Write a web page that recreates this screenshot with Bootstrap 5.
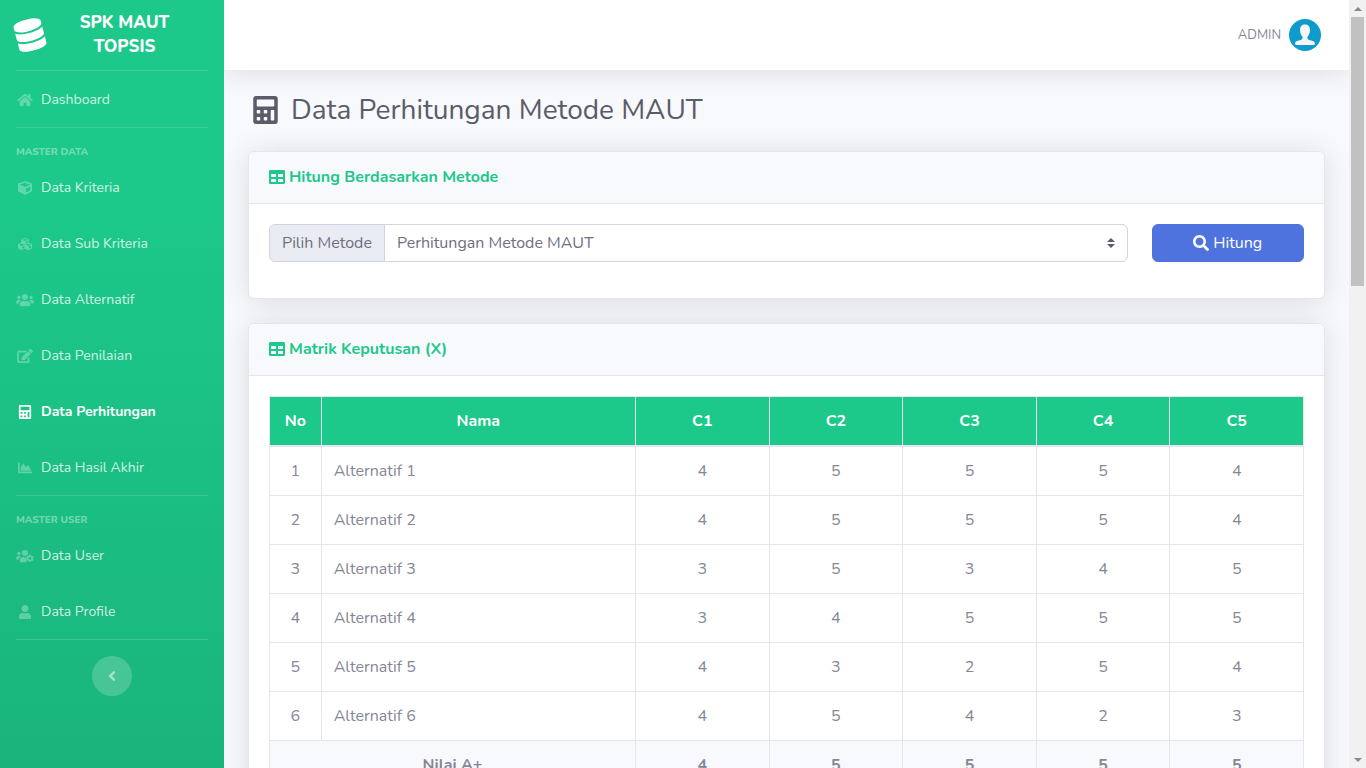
<!DOCTYPE html>
<html lang="id">
<head>
<meta charset="utf-8">
<meta name="viewport" content="width=device-width, initial-scale=1">
<title>SPK MAUT TOPSIS</title>
<link href="https://cdn.jsdelivr.net/npm/bootstrap@5.3.0/dist/css/bootstrap.min.css" rel="stylesheet">
<style>
  body { font-family: "Nunito", "Lato", sans-serif; font-size: 16px; line-height: 24px; color: #858796; background: #f8f9fc; }
  svg { fill: currentColor; overflow: visible; }

  /* Sidebar */
  .side-panel { width: 224px; background: linear-gradient(180deg, #1cc88a 210px, #13855c 2095px); }
  .side-brand { height: 70px; padding: 0 20px 0 15px; font-size: 17px; font-weight: 800; color: #fff; }
  .side-brand svg { width: 30px; height: 32px; transform: rotate(-15deg); }
  .side-rule { margin: 0 16px; border: 0; border-top: 1px solid #fff; opacity: .15; }
  .side-title { padding: 16px 16px 0; height: 31px; font-size: 10px; line-height: 16px; font-weight: 800; color: rgba(255,255,255,.4); }
  .side-panel .nav-link { height: 56px; padding: 1px 16px 0; font-size: 14px; color: rgba(255,255,255,.8); gap: 7px; }
  .side-panel .nav-link svg { width: 18px; height: 14px; color: rgba(255,255,255,.3); }
  .side-panel .nav-link.active, .side-panel .nav-link.active svg { color: #fff; font-weight: 700; }
  .side-toggle { width: 40px; height: 40px; background: rgba(255,255,255,.2); color: rgba(255,255,255,.5); }
  .side-toggle svg { height: 16px; }

  /* Top bar */
  .top-line { height: 70px; padding: 0 28px; background: #fff; box-shadow: 0 2px 28px rgba(58,59,69,.15); }
  .top-line a { font-size: 13px; color: #858796; }

  /* Content */
  .page-area { padding: 23px 24px 0; }
  .page-title { font-size: 28px; line-height: 34px; font-weight: 400; color: #5a5c69; }
  .page-title svg { height: 28px; width: 35px; }
  .panel { --bs-card-border-color: #e3e6f0; --bs-card-cap-bg: #f8f9fc; --bs-card-spacer-x: 20px; --bs-card-spacer-y: 20px; --bs-card-cap-padding-x: 20px; --bs-card-color: #858796; --bs-card-border-radius: 6px; box-shadow: 0 2px 28px rgba(58,59,69,.15); }
  .panel .card-header { height: 52px; padding-top: 13px; color: #1cc88a; }
  .panel .card-header h2 { font-size: 16px; line-height: 24px; font-weight: 700; }
  .panel .card-header svg { height: 16px; width: 16px; }
  .input-group-text { background: #eaecf4; border-color: #d1d3e2; color: #6e707e; }
  .form-select { border-color: #d1d3e2; color: #6e707e; background-size: 8px 10px; background-image: url("data:image/svg+xml,%3csvg xmlns='http://www.w3.org/2000/svg' viewBox='0 0 4 5'%3e%3cpath fill='%235a5c69' d='M2 0L0 2h4zm0 5L0 3h4z'/%3e%3c/svg%3e"); }
  .btn-hitung { --bs-btn-bg: #4e73df; --bs-btn-border-color: #4e73df; --bs-btn-hover-bg: #2e59d9; }
  .btn-hitung svg { width: 16px; height: 16px; }
  .score-table { --bs-table-color: #858796; --bs-table-bg: #fff; --bs-table-border-color: #e3e6f0; table-layout: fixed; border-color: #e3e6f0; }
  .score-table > :not(caption) > * > * { padding: 12px; }
  .score-table > thead > tr > th { --bs-table-bg: #1cc88a; color: #fff; border-bottom: 2px solid #e3e6f0; }
  .score-table tfoot { --bs-table-bg: #f8f9fc; border-top-width: 1px; }
  .c-no { width: 5%; }
  .c-name { width: 30.4%; }

  /* Scroll rail */
  .rail { width: 17px; background: #f1f1f1; }
  .rail span { height: 17px; }
  .rail-thumb { height: 269px; width: 13px; background: #c1c1c1; }
</style>
</head>
<body>
<svg class="d-none" aria-hidden="true">
  <symbol id="i-db" viewBox="0 0 448 512"><path d="M448 73.143v45.714C448 159.143 347.667 192 224 192S0 159.143 0 118.857V73.143C0 32.857 100.333 0 224 0s224 32.857 224 73.143zM448 176v102.857C448 319.143 347.667 352 224 352S0 319.143 0 278.857V176c48.125 33.143 136.208 48.572 224 48.572S399.874 209.143 448 176zm0 160v102.857C448 479.143 347.667 512 224 512S0 479.143 0 438.857V336c48.125 33.143 136.208 48.572 224 48.572S399.874 369.143 448 336z"/></symbol>
  <symbol id="i-home" viewBox="0 0 576 512"><path d="M280.37 148.26L96 300.11V464a16 16 0 0 0 16 16l112.06-.29a16 16 0 0 0 15.92-16V368a16 16 0 0 1 16-16h64a16 16 0 0 1 16 16v95.64a16 16 0 0 0 16 16.05L464 480a16 16 0 0 0 16-16V300L295.67 148.26a12.19 12.19 0 0 0-15.3 0zM571.6 251.47L488 182.56V44.05a12 12 0 0 0-12-12h-56a12 12 0 0 0-12 12v72.61L318.47 43a48 48 0 0 0-61 0L4.34 251.47a12 12 0 0 0-1.6 16.9l25.5 31A12 12 0 0 0 45.15 301l235.22-193.74a12.19 12.19 0 0 1 15.3 0L530.9 301a12 12 0 0 0 16.9-1.6l25.5-31a12 12 0 0 0-1.7-16.93z"/></symbol>
  <symbol id="i-cube" viewBox="0 0 512 512"><path d="M239.1 6.3l-208 78c-18.7 7-31.1 25-31.1 45v225.1c0 18.2 10.3 34.8 26.5 42.9l208 104c13.5 6.8 29.4 6.8 42.9 0l208-104c16.3-8.1 26.5-24.8 26.5-42.9V129.3c0-20-12.4-37.9-31.1-44.9l-208-78C262 2.2 250 2.2 239.1 6.3zM256 68.4l192 72v1.1l-192 78-192-78v-1.1l192-72zm32 356V275.5l160-65v133.9l-160 80z"/></symbol>
  <symbol id="i-cubes" viewBox="0 0 512 512"><path d="M488.6 250.2L392 214V105.500c0-15-9.300-28.400-23.400-33.700l-100-37.500c-8.100-3.100-17.100-3.100-25.300 0l-100 37.500c-14.100 5.300-23.400 18.700-23.400 33.700V214l-96.600 36.200C9.300 255.500 0 268.900 0 283.900V394c0 13.600 7.700 26.100 19.900 32.200l100 50c10.100 5.100 22.100 5.100 32.200 0l103.900-52 103.900 52c10.100 5.100 22.100 5.100 32.200 0l100-50c12.200-6.100 19.900-18.600 19.900-32.200V283.900c0-15-9.300-28.400-23.400-33.700zM358 214.800l-85 31.900v-68.200l85-37v73.300zM154 104.100l102-38.200 102 38.200v.6l-102 41.400-102-41.400v-.6zm84 291.100l-85 42.500v-79.100l85-38.800v75.400zm0-112l-102 41.400-102-41.400v-.6l102-38.200 102 38.200v.6zm240 112l-85 42.500v-79.100l85-38.800v75.400zm0-112l-102 41.400-102-41.400v-.6l102-38.200 102 38.200v.6z"/></symbol>
  <symbol id="i-users" viewBox="0 0 640 512"><path d="M96 224c35.300 0 64-28.700 64-64s-28.700-64-64-64-64 28.700-64 64 28.700 64 64 64zm448 0c35.300 0 64-28.700 64-64s-28.700-64-64-64-64 28.700-64 64 28.700 64 64 64zm32 32h-64c-17.600 0-33.500 7.100-45.100 18.600 40.300 22.100 68.900 62 75.100 109.400h66c17.700 0 32-14.300 32-32v-32c0-35.300-28.700-64-64-64zm-256 0c61.900 0 112-50.100 112-112S381.900 32 320 32 208 82.100 208 144s50.100 112 112 112zm76.800 32h-8.300c-20.800 10-43.900 16-68.500 16s-47.600-6-68.500-16h-8.300C179.600 288 128 339.600 128 403.200V432c0 26.500 21.500 48 48 48h288c26.500 0 48-21.500 48-48v-28.800c0-63.600-51.600-115.200-115.200-115.200zm-223.700-13.400C161.500 263.100 145.600 256 128 256H64c-35.300 0-64 28.700-64 64v32c0 17.700 14.300 32 32 32h65.900c6.300-47.400 34.900-87.300 75.200-109.400z"/></symbol>
  <symbol id="i-edit" viewBox="0 0 576 512"><path d="M402.600 83.200l90.200 90.200c3.800 3.800 3.800 10 0 13.800L274.400 405.600l-92.800 10.300c-12.400 1.400-22.900-9.100-21.500-21.500l10.300-92.800L388.800 83.200c3.800-3.800 10-3.800 13.800 0zm162-22.900l-48.800-48.800c-15.200-15.200-39.900-15.200-55.200 0l-35.400 35.400c-3.800 3.800-3.800 10 0 13.800l90.200 90.200c3.800 3.800 10 3.800 13.800 0l35.400-35.400c15.200-15.300 15.200-40 0-55.200zM384 346.200V448H64V128h229.800c3.200 0 6.200-1.300 8.500-3.500l40-40c7.600-7.600 2.200-20.500-8.500-20.500H48C21.500 64 0 85.500 0 112v352c0 26.500 21.500 48 48 48h352c26.500 0 48-21.500 48-48V306.200c0-10.700-12.900-16-20.500-8.500l-40 40c-2.200 2.300-3.500 5.300-3.500 8.500z"/></symbol>
  <symbol id="i-calc" viewBox="0 0 448 512"><path fill-rule="evenodd" d="M48 0h352c26 0 48 22 48 48v416c0 26-22 48-48 48H48c-26 0-48-22-48-48V48C0 22 22 0 48 0zM77 64c-7 0-13 6-13 13v102c0 7 6 13 13 13h294c7 0 13-6 13-13V77c0-7-6-13-13-13zM77 256c-7 0-13 6-13 13v38c0 7 6 13 13 13h38c7 0 13-6 13-13v-38c0-7-6-13-13-13zM205 256c-7 0-13 6-13 13v38c0 7 6 13 13 13h38c7 0 13-6 13-13v-38c0-7-6-13-13-13zM333 256c-7 0-13 6-13 13v166c0 7 6 13 13 13h38c7 0 13-6 13-13V269c0-7-6-13-13-13zM77 384c-7 0-13 6-13 13v38c0 7 6 13 13 13h38c7 0 13-6 13-13v-38c0-7-6-13-13-13zM205 384c-7 0-13 6-13 13v38c0 7 6 13 13 13h38c7 0 13-6 13-13v-38c0-7-6-13-13-13z"/></symbol>
  <symbol id="i-chart" viewBox="0 0 512 512"><path d="M500 384c6.600 0 12 5.400 12 12v40c0 6.600-5.400 12-12 12H12c-6.600 0-12-5.400-12-12V76c0-6.600 5.400-12 12-12h40c6.600 0 12 5.400 12 12v308h436zM372.700 159.500L288 216l-85.300-113.700c-5.100-6.800-15.500-6.300-19.900 1L96 248v104h384l-89.900-187.800c-3.200-6.500-11.400-8.700-17.400-4.700z"/></symbol>
  <symbol id="i-cog" viewBox="0 0 640 512"><path fill-rule="evenodd" d="M96 224a64 64 0 1 0 0-128 64 64 0 0 0 0 128zM320 256a112 112 0 1 0 0-224 112 112 0 0 0 0 224zM173 275c-12-12-28-19-45-19H64c-35 0-64 29-64 64v32c0 18 14 32 32 32h66c6-47 35-87 75-109zM402 480c-20-20-44-52-36-74 7-17 11-12 7-32-6-26 3-52 23-86h-8a158 158 0 0 1-136 0h-9c-63 0-115 52-115 115v29c0 27 22 48 48 48zM470 205h66l9 39 22 12 38-12 33 57-29 27v26l29 27-33 57-38-12-22 12-9 39h-66l-9-39-22-12-38 12-33-57 29-27v-26l-29-27 33-57 38 12 22-12zM503 292a49 49 0 1 0 0 98 49 49 0 0 0 0-98z"/></symbol>
  <symbol id="i-user" viewBox="0 0 448 512"><path d="M224 256c70.700 0 128-57.300 128-128S294.700 0 224 0 96 57.300 96 128s57.300 128 128 128zm89.600 32h-16.700c-22.200 10.200-46.900 16-72.900 16s-50.600-5.800-72.900-16h-16.700C60.200 288 0 348.200 0 422.400V464c0 26.500 21.500 48 48 48h352c26.500 0 48-21.500 48-48v-41.600c0-74.200-60.200-134.400-134.400-134.400z"/></symbol>
  <symbol id="i-left" viewBox="0 0 256 512"><path d="M31.700 239l136-136c9.400-9.400 24.600-9.400 33.900 0l22.600 22.600c9.400 9.400 9.400 24.600 0 33.900L127.900 256l96.400 96.400c9.400 9.400 9.400 24.600 0 33.900L201.700 409c-9.400 9.400-24.600 9.400-33.900 0l-136-136c-9.500-9.400-9.500-24.600-.1-34z"/></symbol>
  <symbol id="i-table" viewBox="0 0 512 512"><path d="M464 32H48C21.490 32 0 53.490 0 80v352c0 26.510 21.490 48 48 48h416c26.510 0 48-21.490 48-48V80c0-26.510-21.490-48-48-48zM224 416H64v-96h160v96zm0-160H64v-96h160v96zm224 160H288v-96h160v96zm0-160H288v-96h160v96z"/></symbol>
  <symbol id="i-search" viewBox="0 0 512 512"><path d="M505 442.700L405.300 343c-4.500-4.500-10.600-7-17-7H372c27.600-35.300 44-79.700 44-128C416 93.100 322.900 0 208 0S0 93.100 0 208s93.100 208 208 208c48.300 0 92.700-16.400 128-44v16.300c0 6.400 2.500 12.500 7 17l99.700 99.700c9.400 9.400 24.600 9.400 33.900 0l28.300-28.300c9.400-9.400 9.400-24.600.1-34zM208 336c-70.700 0-128-57.200-128-128 0-70.700 57.200-128 128-128 70.700 0 128 57.200 128 128 0 70.700-57.200 128-128 128z"/></symbol>
</svg>

<div class="d-flex vh-100 overflow-hidden">
  <aside class="side-panel flex-shrink-0">
    <div class="side-brand d-flex align-items-center">
      <svg class="flex-shrink-0"><use href="#i-db"/></svg>
      <div class="flex-fill text-center px-3">SPK MAUT TOPSIS</div>
    </div>
    <hr class="side-rule">
    <nav class="nav flex-column flex-nowrap">
      <a class="nav-link d-flex align-items-center" href="#"><svg><use href="#i-home"/></svg>Dashboard</a>
      <hr class="side-rule">
      <div class="side-title">MASTER DATA</div>
      <a class="nav-link d-flex align-items-center" href="#"><svg><use href="#i-cube"/></svg>Data Kriteria</a>
      <a class="nav-link d-flex align-items-center" href="#"><svg><use href="#i-cubes"/></svg>Data Sub Kriteria</a>
      <a class="nav-link d-flex align-items-center" href="#"><svg><use href="#i-users"/></svg>Data Alternatif</a>
      <a class="nav-link d-flex align-items-center" href="#"><svg><use href="#i-edit"/></svg>Data Penilaian</a>
      <a class="nav-link d-flex align-items-center active" aria-current="page" href="#"><svg><use href="#i-calc"/></svg>Data Perhitungan</a>
      <a class="nav-link d-flex align-items-center" href="#"><svg><use href="#i-chart"/></svg>Data Hasil Akhir</a>
      <hr class="side-rule">
      <div class="side-title">MASTER USER</div>
      <a class="nav-link d-flex align-items-center" href="#"><svg><use href="#i-cog"/></svg>Data User</a>
      <a class="nav-link d-flex align-items-center" href="#"><svg><use href="#i-user"/></svg>Data Profile</a>
      <hr class="side-rule">
    </nav>
    <button type="button" class="side-toggle btn rounded-circle border-0 p-0 d-flex align-items-center justify-content-center mx-auto mt-3" aria-label="Ciutkan menu"><svg width="8"><use href="#i-left"/></svg></button>
  </aside>

  <div class="flex-fill overflow-hidden">
    <header class="top-line d-flex align-items-center justify-content-end">
      <a href="#" class="d-flex align-items-center gap-2 text-decoration-none">ADMIN
        <svg width="32" height="32" viewBox="0 0 32 32"><circle cx="16" cy="16" r="16" fill="#0d9ccc"/><path fill="#f7f5f5" d="M16 5.500c3 0 5 2 5 5.500 0 2.500-1 5-2.400 6.500-.6 1.500-.2 2.800 1.400 3.400 2.600.9 6 .9 6 3.600 0 1.300-1 1.500-2.200 1.500H8.200C7 26 6 25.800 6 24.500c0-2.700 3.400-2.700 6-3.600 1.600-.6 2-1.900 1.400-3.400C12 16 11 13.500 11 11c0-3.500 2-5.500 5-5.500z"/></svg>
      </a>
    </header>

    <main class="page-area">
      <h1 class="page-title d-flex align-items-center mb-4"><svg class="me-2"><use href="#i-calc"/></svg>Data Perhitungan Metode MAUT</h1>

      <section class="card panel mb-4">
        <div class="card-header"><h2 class="m-0 d-flex align-items-center gap-1"><svg><use href="#i-table"/></svg>Hitung Berdasarkan Metode</h2></div>
        <div class="card-body">
          <form class="row mb-3">
            <div class="col-10">
              <div class="input-group">
                <label class="input-group-text" for="metode">Pilih Metode</label>
                <select class="form-select" id="metode"><option>Perhitungan Metode MAUT</option><option>Perhitungan Metode TOPSIS</option></select>
              </div>
            </div>
            <div class="col-2">
              <button type="button" class="btn btn-primary btn-hitung w-100 d-flex align-items-center justify-content-center gap-1"><svg><use href="#i-search"/></svg>Hitung</button>
            </div>
          </form>
        </div>
      </section>

      <section class="card panel mb-4">
        <div class="card-header"><h2 class="m-0 d-flex align-items-center gap-1"><svg><use href="#i-table"/></svg>Matrik Keputusan (X)</h2></div>
        <div class="card-body">
          <table class="table table-bordered score-table text-center mb-3">
            <colgroup><col class="c-no"><col class="c-name"><col><col><col><col><col></colgroup>
            <thead><tr><th>No</th><th>Nama</th><th>C1</th><th>C2</th><th>C3</th><th>C4</th><th>C5</th></tr></thead>
            <tbody>
              <tr><td>1</td><td class="text-start">Alternatif 1</td><td>4</td><td>5</td><td>5</td><td>5</td><td>4</td></tr>
              <tr><td>2</td><td class="text-start">Alternatif 2</td><td>4</td><td>5</td><td>5</td><td>5</td><td>4</td></tr>
              <tr><td>3</td><td class="text-start">Alternatif 3</td><td>3</td><td>5</td><td>3</td><td>4</td><td>5</td></tr>
              <tr><td>4</td><td class="text-start">Alternatif 4</td><td>3</td><td>4</td><td>5</td><td>5</td><td>5</td></tr>
              <tr><td>5</td><td class="text-start">Alternatif 5</td><td>4</td><td>3</td><td>2</td><td>5</td><td>4</td></tr>
              <tr><td>6</td><td class="text-start">Alternatif 6</td><td>4</td><td>5</td><td>4</td><td>2</td><td>3</td></tr>
            </tbody>
            <tfoot>
              <tr><th colspan="2">Nilai A+</th><th>4</th><th>5</th><th>5</th><th>5</th><th>5</th></tr>
            </tfoot>
          </table>
        </div>
      </section>
    </main>
  </div>

  <div class="rail flex-shrink-0 d-flex flex-column align-items-center" aria-hidden="true">
    <span class="d-flex align-items-center"><svg width="8" height="4" viewBox="0 0 8 4" fill="#a3a3a3"><path d="M4 0l4 4H0z"/></svg></span>
    <div class="rail-thumb"></div>
    <span class="d-flex align-items-center mt-auto"><svg width="8" height="4" viewBox="0 0 8 4" fill="#505050"><path d="M4 4l4-4H0z"/></svg></span>
  </div>
</div>
<script src="https://cdn.jsdelivr.net/npm/bootstrap@5.3.0/dist/js/bootstrap.bundle.min.js"></script>
</body>
</html>
